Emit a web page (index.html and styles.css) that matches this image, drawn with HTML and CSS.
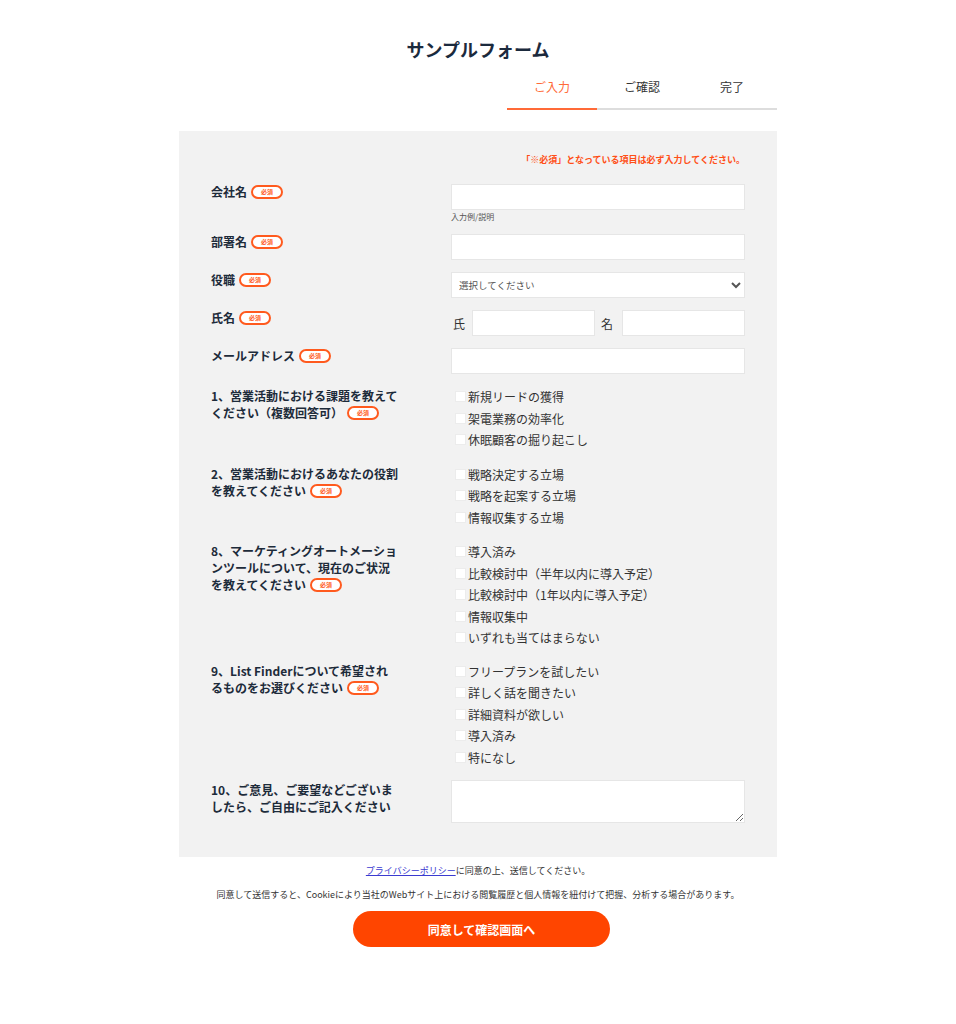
FILE: index.html
```html
<!DOCTYPE html>
<html lang="ja">
<head>
  <meta charset="utf-8"/>
  <meta name="viewport" content="width=device-width, initial-scale=1.0">
  <title>サンプルフォーム</title>
  <link rel="stylesheet" href="styles.css">
</head>
<body>
  <div class="wrap">
    <h1 class="title">サンプルフォーム</h1>

    <ul class="steps">
      <li class="step current">ご入力</li>
      <li class="step">ご確認</li>
      <li class="step">完了</li>
    </ul>

    <form class="form-box">
      <p class="note">「※必須」となっている項目は必ず入力してください。</p>

      <div class="row">
        <div class="label">会社名<span class="req">必須</span></div>
        <div class="field">
          <input type="text">
          <p class="help">入力例/説明</p>
        </div>
      </div>

      <div class="row">
        <div class="label">部署名<span class="req">必須</span></div>
        <div class="field"><input type="text"></div>
      </div>

      <div class="row">
        <div class="label">役職<span class="req">必須</span></div>
        <div class="field">
          <select>
            <option>選択してください</option>
          </select>
        </div>
      </div>

      <div class="row">
        <div class="label">氏名<span class="req">必須</span></div>
        <div class="field name-field">
          <span class="sub sub-first">氏</span>
          <input type="text">
          <span class="sub">名</span>
          <input type="text">
        </div>
      </div>

      <div class="row">
        <div class="label">メールアドレス<span class="req">必須</span></div>
        <div class="field"><input type="email"></div>
      </div>

      <div class="row row-wide">
        <div class="label q">1、営業活動における課題を教えて<br>ください（複数回答可）<span class="req">必須</span></div>
        <div class="field checks">
          <label><input type="checkbox">新規リードの獲得</label>
          <label><input type="checkbox">架電業務の効率化</label>
          <label><input type="checkbox">休眠顧客の掘り起こし</label>
        </div>
      </div>

      <div class="row row-wide">
        <div class="label q">2、営業活動におけるあなたの役割<br>を教えてください<span class="req">必須</span></div>
        <div class="field checks">
          <label><input type="checkbox">戦略決定する立場</label>
          <label><input type="checkbox">戦略を起案する立場</label>
          <label><input type="checkbox">情報収集する立場</label>
        </div>
      </div>

      <div class="row">
        <div class="label q">8、マーケティングオートメーショ<br>ンツールについて、現在のご状況<br>を教えてください<span class="req">必須</span></div>
        <div class="field checks">
          <label><input type="checkbox">導入済み</label>
          <label><input type="checkbox">比較検討中（半年以内に導入予定）</label>
          <label><input type="checkbox">比較検討中（1年以内に導入予定）</label>
          <label><input type="checkbox">情報収集中</label>
          <label><input type="checkbox">いずれも当てはまらない</label>
        </div>
      </div>

      <div class="row">
        <div class="label q">9、List Finderについて希望され<br>るものをお選びください<span class="req">必須</span></div>
        <div class="field checks">
          <label><input type="checkbox">フリープランを試したい</label>
          <label><input type="checkbox">詳しく話を聞きたい</label>
          <label><input type="checkbox">詳細資料が欲しい</label>
          <label><input type="checkbox">導入済み</label>
          <label><input type="checkbox">特になし</label>
        </div>
      </div>

      <div class="row">
        <div class="label q">10、ご意見、ご要望などございま<br>したら、ご自由にご記入ください</div>
        <div class="field"><textarea></textarea></div>
      </div>
    </form>

    <p class="agree"><a href="#">プライバシーポリシー</a>に同意の上、送信してください。</p>
    <p class="cookie">同意して送信すると、Cookieにより当社のWebサイト上における閲覧履歴と個人情報を紐付けて把握、分析する場合があります。</p>

    <div class="actions">
      <button type="button" class="submit">同意して確認画面へ</button>
    </div>
  </div>
</body>
</html>
```

FILE: styles.css
```css
body {
  font-family: "Noto Sans CJK JP", "Noto Sans", sans-serif;
  background: #fff;
  color: #333;
  margin: 0;
}

.wrap {
  width: 598px;
  margin: 0 auto;
  padding-top: 37px;
}

.title {
  margin: 0;
  font-size: 18px;
  line-height: 24px;
  font-weight: 700;
  color: #1b2a3d;
  text-align: center;
}

.steps {
  list-style: none;
  display: flex;
  justify-content: flex-end;
  margin: 18px 0 0;
  padding: 0;
}

.step {
  width: 90px;
  text-align: center;
  font-size: 12px;
  line-height: 16px;
  padding-bottom: 13px;
  border-bottom: 2px solid #ddd;
  color: #333;
}

.step.current {
  color: #ff6a38;
  border-bottom-color: #ff6a38;
}

.form-box {
  margin-top: 21px;
  background: #f2f2f2;
  padding: 22px 32px 34px;
}

.note {
  margin: 0 0 17px;
  text-align: right;
  font-size: 9px;
  line-height: 14px;
  font-weight: 700;
  color: #ff4f17;
}

.row {
  display: flex;
  margin-bottom: 12px;
}

.row-wide {
  margin-bottom: 13px;
}

.row:last-child {
  margin-bottom: 0;
}

.label {
  width: 240px;
  flex-shrink: 0;
  font-size: 12px;
  line-height: 16px;
  font-weight: 700;
  color: #1d2b3a;
}

.label.q {
  line-height: 17px;
  padding-top: 1px;
}

.req {
  display: inline-block;
  vertical-align: middle;
  margin-left: 4px;
  margin-top: -3px;
  width: 28px;
  height: 10px;
  border: 2px solid #ff5a1e;
  border-radius: 8px;
  color: #ff5a1e;
  font-size: 6px;
  line-height: 10px;
  text-align: center;
  font-weight: 700;
  background: #fff;
}

.field {
  width: 294px;
}

input[type="text"],
input[type="email"],
select,
textarea {
  display: block;
  width: 100%;
  height: 26px;
  margin: 0;
  border: 1px solid #e6e6e6;
  background: #fff;
  box-sizing: border-box;
  font-family: inherit;
}

select {
  font-size: 9.5px;
  color: #555;
  padding-left: 3px;
}

textarea {
  height: 43px;
  resize: vertical;
}

.help {
  margin: 2px 0 0;
  font-size: 8px;
  line-height: 10px;
  color: #555;
}

.name-field {
  display: flex;
  align-items: center;
}

.name-field input[type="text"] {
  width: 123px;
  flex-shrink: 0;
}

.sub {
  font-size: 12px;
  color: #333;
  margin: 0 9px 0 6px;
}

.sub-first {
  margin: 0 7px 0 2px;
}

.checks label {
  display: flex;
  align-items: center;
  font-size: 12px;
  line-height: 21.5px;
  color: #333;
}

.checks input[type="checkbox"] {
  appearance: none;
  -webkit-appearance: none;
  width: 11px;
  height: 11px;
  margin: 0 2px 0 4px;
  background: #fff;
  border: 1px solid #ececec;
  box-sizing: border-box;
}

.agree,
.cookie {
  margin: 0;
  text-align: center;
  font-size: 9px;
  line-height: 12px;
  color: #333;
}

.agree {
  margin-top: 8px;
}

.agree a {
  color: #3a3ad0;
}

.cookie {
  margin-top: 12px;
  width: 700px;
  margin-left: -51px;
}

.actions {
  margin-top: 10px;
  text-align: center;
}

.submit {
  width: 257px;
  height: 36px;
  margin-left: 7px;
  border: none;
  border-radius: 18px;
  background: #ff4500;
  color: #fff;
  font-family: inherit;
  font-size: 12px;
  font-weight: 700;
  cursor: pointer;
}
```
